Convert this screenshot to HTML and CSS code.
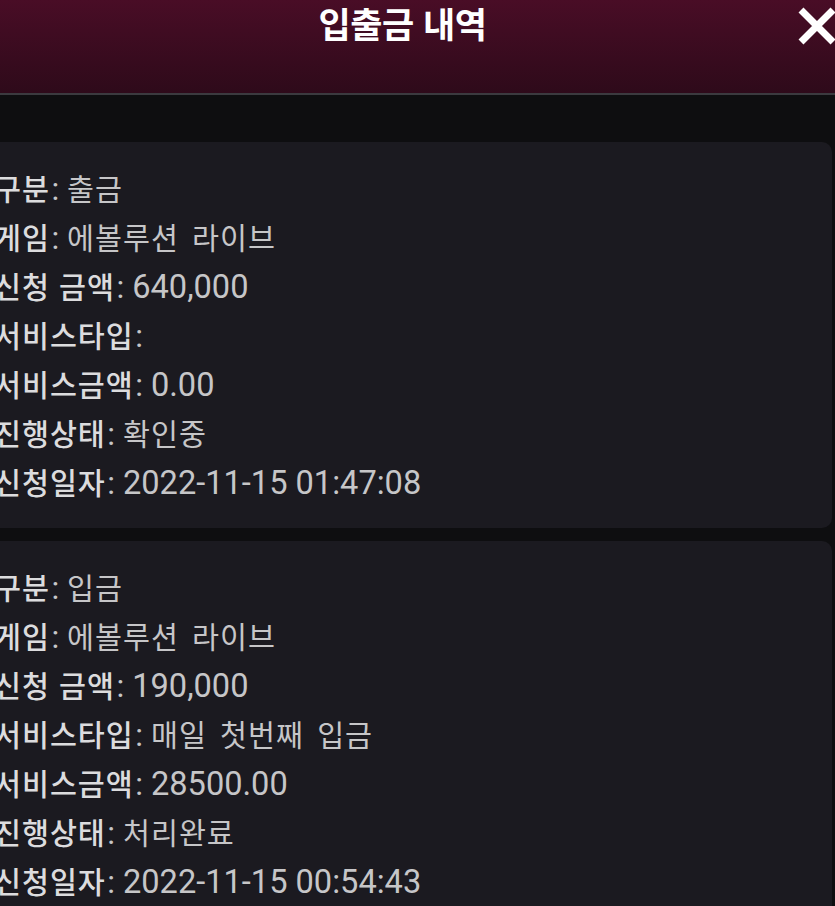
FILE: index.html
```html
<!DOCTYPE html>
<html lang="ko">
<head>
<meta charset="utf-8">
<link rel="stylesheet" href="styles.css">
</head>
<body>
<header class="top">
  <h1 class="title">입출금 내역</h1>
  <span class="close" aria-label="닫기">
    <svg viewBox="0 0 40 40" width="40" height="40"><path d="M4 4 L36 36 M36 4 L4 36" stroke="#fff" stroke-width="7" stroke-linecap="butt" fill="none"/></svg>
  </span>
</header>
<main class="list">
  <section class="card">
    <p class="row"><b>구분</b>: <span class="ko">출금</span></p>
    <p class="row"><b>게임</b>: <span class="ko">에볼루션 라이브</span></p>
    <p class="row"><b>신청 금액</b>: <span class="num">640,000</span></p>
    <p class="row"><b>서비스타입</b>: </p>
    <p class="row"><b>서비스금액</b>: <span class="num">0.00</span></p>
    <p class="row"><b>진행상태</b>: <span class="ko">확인중</span></p>
    <p class="row"><b>신청일자</b>: <span class="num">2022-11-15 01:47:08</span></p>
  </section>
  <section class="card">
    <p class="row"><b>구분</b>: <span class="ko">입금</span></p>
    <p class="row"><b>게임</b>: <span class="ko">에볼루션 라이브</span></p>
    <p class="row"><b>신청 금액</b>: <span class="num">190,000</span></p>
    <p class="row"><b>서비스타입</b>: <span class="ko">매일 첫번째 입금</span></p>
    <p class="row"><b>서비스금액</b>: <span class="num">28500.00</span></p>
    <p class="row"><b>진행상태</b>: <span class="ko">처리완료</span></p>
    <p class="row"><b>신청일자</b>: <span class="num">2022-11-15 00:54:43</span></p>
  </section>
</main>
</body>
</html>
```
FILE: styles.css
```css
html, body {
  margin: 0;
  padding: 0;
  background: #0e0e10;
  overflow: hidden;
  height: 906px;
}
body {
  font-family: Roboto, "Noto Sans CJK KR", sans-serif;
}
.top {
  height: 93px;
  border-bottom: 2px solid #3b3a3f;
  background: linear-gradient(180deg, #490d26 0%, #2e0a1a 100%);
  display: flex;
  justify-content: center;
  padding-right: 30px;
  position: relative;
}
.title {
  margin: 0;
  font-family: "Noto Sans CJK KR", sans-serif;
  font-weight: 700;
  font-size: 35px;
  line-height: 46px;
  color: #fff;
  letter-spacing: -0.5px;
}
.close {
  position: absolute;
  right: -2px;
  top: 6px;
  width: 40px;
  height: 40px;
}
.close svg { display: block; }
.list {
  padding: 47px 3px 0 0;
  margin-left: -12px;
  display: flex;
  flex-direction: column;
  gap: 13px;
}
.card {
  background: #1b1a20;
  border-radius: 10px;
  padding: 21px 0 22px 6px;
}
.row {
  margin: 0;
  height: 49px;
  font-size: 32px;
  line-height: 49px;
  color: #c6c6c8;
  white-space: nowrap;
}
.row b {
  font-family: "Noto Sans CJK KR", sans-serif;
  font-size: 29.3px;
  font-weight: 500;
  letter-spacing: 1px;
  margin-right: 1.5px;
  color: #dcdcde;
}
.ko {
  font-family: "Noto Sans CJK KR", sans-serif;
  font-size: 29.3px;
  letter-spacing: 1px;
  word-spacing: 4px;
}
.num {
  font-family: Roboto, sans-serif;
  font-size: 32.6px;
}
```
